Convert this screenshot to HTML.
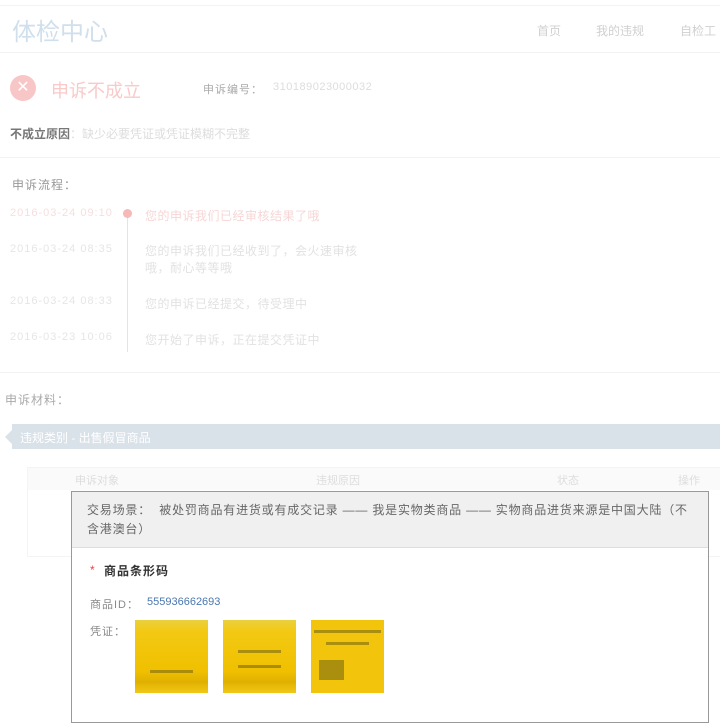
<!DOCTYPE html>
<html><head><meta charset="utf-8"><style>
body{margin:0;width:720px;height:708px;overflow:hidden;background:#fff;font-family:"Liberation Sans","Noto Sans CJK SC",sans-serif;position:relative}
.a{position:absolute;white-space:nowrap}
.img{position:absolute;top:620px;width:73px;height:73px;background:linear-gradient(#e8d040 0,#f3c914 15%,#f0c000 70%,#e0b000 85%,#f2c818 100%)}
.img i{position:absolute;left:15px;right:15px;height:3px;background:#7a6a10;opacity:.6}
</style></head><body>
<div class="a" style="left:0;top:5px;width:720px;height:1px;background:#f3f3f3"></div>
<div class="a" style="left:12px;top:12px;font-size:24px;color:#cfdfec">体检中心</div>
<div class="a" style="left:537px;top:22px;font-size:12px;color:#d0d0d0">首页</div>
<div class="a" style="left:596px;top:22px;font-size:12px;color:#d0d0d0">我的违规</div>
<div class="a" style="left:680px;top:22px;font-size:12px;color:#d0d0d0">自检工</div>
<div class="a" style="left:0;top:52px;width:720px;height:1px;background:#f2f2f2"></div>
<div class="a" style="left:10px;top:75px;width:26px;height:26px;border-radius:50%;background:#f8c6c6;color:#fff;text-align:center;line-height:26px;font-size:16px">✕</div>
<div class="a" style="left:51px;top:77px;font-size:18px;color:#f8caca">申诉不成立</div>
<div class="a" style="left:203px;top:81px;font-size:11px;color:#aaa;letter-spacing:1px">申诉编号：</div>
<div class="a" style="left:273px;top:81px;font-size:11px;color:#ddd;letter-spacing:.5px">310189023000032</div>
<div class="a" style="left:10px;top:125px;font-size:12px;color:#777;font-weight:bold">不成立原因<span style="color:#ddd;font-weight:normal">：缺少必要凭证或凭证模糊不完整</span></div>
<div class="a" style="left:0;top:157px;width:720px;height:1px;background:#f2f2f2"></div>
<div class="a" style="left:12px;top:176px;font-size:12px;color:#999;letter-spacing:1px">申诉流程：</div>
<div class="a" style="left:127px;top:214px;width:1px;height:138px;background:#f3dede"></div>
<div class="a" style="left:123px;top:209px;width:9px;height:9px;border-radius:50%;background:#f6b8b8"></div>
<div class="a" style="left:10px;top:207px;font-size:11px;color:#f7dede;letter-spacing:1px">2016-03-24 09:10</div>
<div class="a" style="left:145px;top:207px;font-size:12px;color:#f7d6d6;letter-spacing:.5px">您的申诉我们已经审核结果了哦</div>
<div class="a" style="left:10px;top:243px;font-size:11px;color:#e6e6e6;letter-spacing:1px">2016-03-24 08:35</div>
<div class="a" style="left:145px;top:243px;font-size:12px;color:#e2e2e2;line-height:17px;white-space:normal;width:225px;letter-spacing:.5px">您的申诉我们已经收到了，会火速审核哦，耐心等等哦</div>
<div class="a" style="left:10px;top:295px;font-size:11px;color:#e6e6e6;letter-spacing:1px">2016-03-24 08:33</div>
<div class="a" style="left:145px;top:295px;font-size:12px;color:#e2e2e2;letter-spacing:.5px">您的申诉已经提交，待受理中</div>
<div class="a" style="left:10px;top:331px;font-size:11px;color:#e6e6e6;letter-spacing:1px">2016-03-23 10:06</div>
<div class="a" style="left:145px;top:331px;font-size:12px;color:#e2e2e2;letter-spacing:.5px">您开始了申诉，正在提交凭证中</div>
<div class="a" style="left:0;top:372px;width:720px;height:1px;background:#f2f2f2"></div>
<div class="a" style="left:5px;top:391px;font-size:12px;color:#aaa;letter-spacing:1px">申诉材料：</div>
<div class="a" style="left:12px;top:424px;width:708px;height:25px;background:#d9e1e9"></div>
<div class="a" style="left:5px;top:430px;width:0;height:0;border-top:7px solid transparent;border-bottom:7px solid transparent;border-right:7px solid #d9e1e9"></div>
<div class="a" style="left:20px;top:429px;font-size:12px;color:#fff">违规类别 - 出售假冒商品</div>
<div class="a" style="left:27px;top:467px;width:693px;height:88px;border:1px solid #f4f4f4;border-right:none"></div>
<div class="a" style="left:28px;top:468px;width:692px;height:22px;background:#fafafa"></div>
<div class="a" style="left:75px;top:472px;font-size:11px;color:#ddd">申诉对象</div>
<div class="a" style="left:316px;top:472px;font-size:11px;color:#ddd">违规原因</div>
<div class="a" style="left:557px;top:472px;font-size:11px;color:#ddd">状态</div>
<div class="a" style="left:678px;top:472px;font-size:11px;color:#ddd">操作</div>
<div class="a" style="left:71px;top:491px;width:636px;height:230px;border:1px solid #999;background:#fff"></div>
<div class="a" style="left:72px;top:492px;width:636px;height:55px;background:#f0f0f0;border-bottom:1px solid #ddd"></div>
<div class="a" style="left:87px;top:501px;font-size:12px;color:#666;line-height:19px;white-space:normal;width:612px;letter-spacing:.8px">交易场景：&nbsp; 被处罚商品有进货或有成交记录 —— 我是实物类商品 —— 实物商品进货来源是中国大陆（不含港澳台）</div>
<div class="a" style="left:90px;top:563px;font-size:12px;color:#e44">*</div>
<div class="a" style="left:104px;top:562px;font-size:12px;color:#333;font-weight:bold;letter-spacing:1px">商品条形码</div>
<div class="a" style="left:90px;top:596px;font-size:11px;color:#888;letter-spacing:1px">商品ID：</div>
<div class="a" style="left:147px;top:596px;font-size:11px;color:#4a78b0">555936662693</div>
<div class="a" style="left:90px;top:623px;font-size:11px;color:#888;letter-spacing:1px">凭证：</div>
<div class="img" style="left:135px"><i style="top:50px"></i></div>
<div class="img" style="left:223px"><i style="top:30px"></i><i style="top:45px"></i></div>
<div class="img" style="left:311px;background:#f2c40c"><i style="top:10px;left:3px;right:3px"></i><i style="top:22px"></i><i style="top:40px;left:8px;right:40px;height:20px"></i></div>
</body></html>
